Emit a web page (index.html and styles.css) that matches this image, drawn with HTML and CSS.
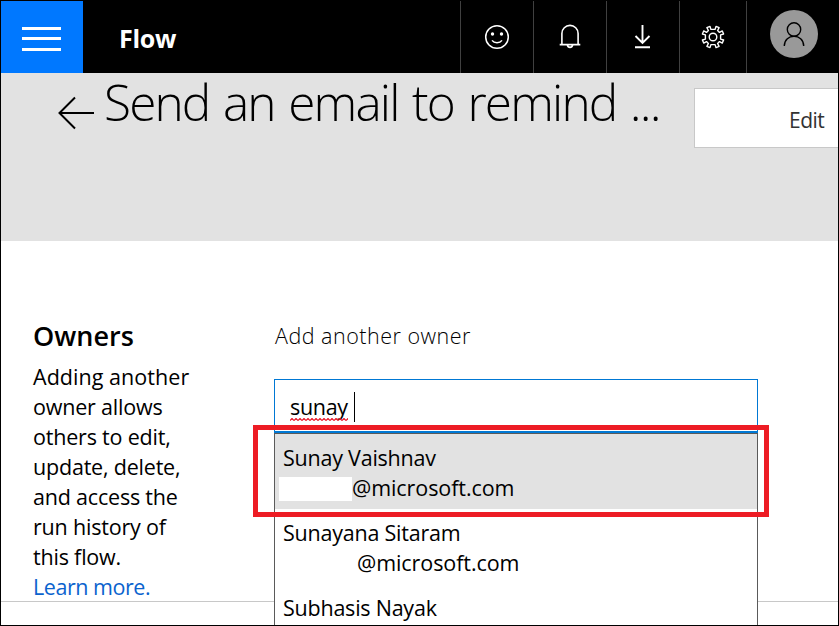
FILE: index.html
```html
<!DOCTYPE html>
<html lang="en">
<head>
<meta charset="utf-8">
<title>Flow</title>
<link rel="stylesheet" href="styles.css">
</head>
<body>
<div class="app">
  <header class="topbar">
    <button class="menu" aria-label="Menu"><svg width="39" height="24" viewBox="0 0 39 24"><path d="M0 0h39v3H0zM0 10h39v3H0zM0 21h39v3H0z" fill="#fff"/></svg></button>
    <span class="brand">Flow</span>
    <nav class="tools">
      <span class="tool">
        <svg width="26" height="26" viewBox="0 0 26 26" fill="none" stroke="#fff" stroke-width="1.500"><circle cx="13" cy="13" r="11.3"/><path d="M8 16.400c2.300 3 7.700 3 10 0"/><g fill="#fff" stroke="none"><circle cx="8.500" cy="10" r="1.700"/><circle cx="17.500" cy="10" r="1.700"/></g></svg>
      </span>
      <span class="tool">
        <svg width="26" height="26" viewBox="0 0 26 26" fill="none" stroke="#fff" stroke-width="1.600"><path d="M4.900 20.400V9.500a8.100 8.100 0 0 1 16.200 0v10.900M2.700 20.600h20.600M10.300 21a2.800 3.200 0 0 0 5.400 0"/></svg>
      </span>
      <span class="tool">
        <svg width="26" height="26" viewBox="0 0 26 26" fill="none" stroke="#fff" stroke-width="1.900"><path d="M12.500 1v18M5.500 12l7 7 7-7M5 23.200h15"/></svg>
      </span>
      <span class="tool tool-settings">
        <svg width="26" height="26" viewBox="0 0 26 26" fill="none" stroke="#fff" stroke-width="1.400" stroke-linejoin="round"><circle cx="13" cy="13" r="3.800"/><path d="M10.900 5.400 10 2.400 6.900 3.700 8.400 6.500 6.500 8.400 3.700 6.900 2.400 10 5.400 10.900V15.100L2.400 16 3.700 19.100 6.500 17.600 8.400 19.500 6.900 22.300 10 23.600 10.900 20.600H15.100L16 23.600 19.100 22.300 17.600 19.500 19.500 17.600 22.300 19.100 23.600 16 20.600 15.100V10.900L23.600 10 22.300 6.900 19.500 8.400 17.600 6.500 19.100 3.700 16 2.400 15.100 5.400Z"/></svg>
      </span>
      <span class="tool tool-user">
        <span class="avatar"><svg width="24" height="28" viewBox="0 0 24 28" fill="none" stroke="#000" stroke-width="1.400"><circle cx="12" cy="9.500" r="6.700"/><path d="M2.300 26c0-13 19.400-13 19.400 0"/></svg></span>
      </span>
    </nav>
  </header>
  <section class="hero">
    <svg class="back" width="38" height="34" viewBox="0 0 38 34" fill="none" stroke="#000" stroke-width="2"><path d="M37 17H2.500M18 1.500 2.500 17 18 32.500"/></svg>
    <h1 class="title">Send an email to remind ...</h1>
    <button class="edit">Edit</button>
  </section>
  <main class="panel">
    <aside class="owners">
      <h2 class="owners-title">Owners</h2>
      <p class="owners-text"><span class="open">Adding another</span><br>owner allows<br>others to edit,<br>update, delete,<br>and access the<br>run history of<br>this flow.<br><a class="link">Learn more.</a></p>
    </aside>
    <div class="picker">
      <label class="picker-label">Add another owner</label>
      <div class="field"><span class="typed">sunay<svg class="squiggle" width="58" height="3" viewBox="0 0 58 3"><defs><pattern id="wave" width="4" height="3" patternUnits="userSpaceOnUse"><path d="M0 2.500 2 .5l2 2" fill="none" stroke="#e81123" stroke-width="1.200"/></pattern></defs><rect width="58" height="3" fill="url(#wave)"/></svg></span><span class="caret"></span></div>
      <ul class="results">
        <li class="person selected"><span class="name">Sunay Vaishnav</span><span class="mail"><span class="mask"></span>@microsoft.com</span></li>
        <li class="person"><span class="name">Sunayana Sitaram</span><span class="mail mail-indent">@microsoft.com</span></li>
        <li class="person"><span class="name">Subhasis Nayak</span></li>
      </ul>
      <div class="highlight"></div>
    </div>
  </main>
</div>
</body>
</html>
```
FILE: styles.css
```css
* { box-sizing: border-box; }
body { margin: 0; font-family: "Open Sans", "Noto Sans", sans-serif; color: #000; background: #fff; }
button { font: inherit; border: 0; padding: 0; }
svg { display: block; flex: none; }
h1, h2, p, ul { margin: 0; padding: 0; }
.app { width: 839px; height: 626px; border: 1px solid #000; overflow: hidden; display: flex; flex-direction: column; }

.topbar { height: 72px; flex: none; background: #000; display: flex; }
.menu { width: 82px; background: #0078ff; padding: 26px 0 0 21px; display: flex; align-items: flex-start; }
.brand { color: #fff; font-size: 25px; font-weight: 700; line-height: 34px; letter-spacing: -0.3px; padding: 20px 0 0 36px; }
.tools { display: flex; margin-left: auto; }
.tool { width: 73px; border-left: 1px solid #404040; display: flex; align-items: center; justify-content: center; }
.tool-settings { width: 67px; }
.tool-user { width: 92px; align-items: flex-start; padding: 9px 0 0 3px; }
.avatar { width: 48px; height: 48px; border-radius: 50%; background: #999; display: flex; align-items: center; justify-content: center; }

.hero { height: 168px; flex: none; background: #e2e2e2; display: flex; align-items: flex-start; }
.back { margin: 23px 0 0 56px; }
.title { width: 599px; flex: none; padding: 0 0 0 9px; margin-top: -1px; font-size: 49.500px; font-weight: 300; line-height: 60px; letter-spacing: -1.85px; word-spacing: 2.500px; white-space: nowrap; }
.edit { width: 150px; height: 60px; flex: none; margin-top: 15px; background: #fff; border: 1px solid #c8c8c8; color: #333; font-size: 21px; letter-spacing: -0.5px; text-align: left; padding: 3px 0 0 94px; }

.panel { height: 361px; flex: none; border-bottom: 1px solid #c8c8c8; padding: 78px 0 0 32px; display: flex; align-items: flex-start; }
.owners { width: 241px; }
.owners-title { font-size: 27px; font-weight: 600; line-height: 34px; }
.owners-text { font-size: 21.500px; line-height: 30px; letter-spacing: -0.2px; padding-top: 9px; white-space: nowrap; }
.open { letter-spacing: 0.05px; }
.link { color: #0b63ce; letter-spacing: -0.45px; }
.picker { width: 484px; position: relative; font-size: 21.500px; line-height: 30px; white-space: nowrap; }
.picker-label { display: block; height: 60px; font-weight: 300; letter-spacing: 0.5px; padding: 2px 0 0 1px; }
.field { height: 54px; border: 1px solid #0078d4; border-bottom-width: 2px; padding: 12px 15px 0; display: flex; background: #fff; }
.typed { position: relative; height: 30px; letter-spacing: -0.3px; }
.squiggle { position: absolute; left: 0; top: 26px; }
.caret { width: 1px; height: 30px; background: #000; margin-left: 6px; }
.results { list-style: none; height: 220px; background: #fff; border: 1px solid #5a5a5a; position: relative; }
.person { height: 75px; padding: 9px 8px 0; }
.selected { background: #e2e2e2; }
.name, .mail { display: flex; height: 30px; }
.name { letter-spacing: -0.23px; }
.mail { letter-spacing: -0.08px; }
.mask { width: 73px; height: 24px; background: #fff; margin: 4px 0 0 -4px; }
.mail-indent { padding-left: 74px; }
.highlight { position: absolute; left: -21px; top: 106px; width: 516px; height: 92px; border: 5px solid #ed1c24; }
```
